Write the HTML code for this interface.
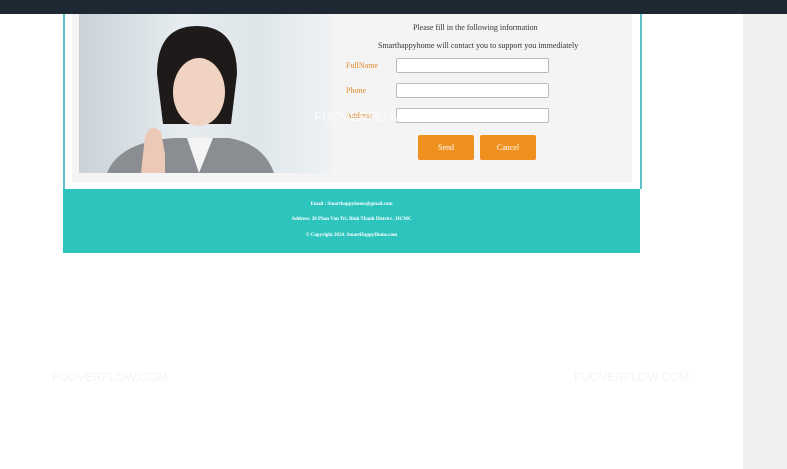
<!DOCTYPE html>
<html><head><style>
body{margin:0;width:787px;height:469px;background:#fff;position:relative;overflow:hidden;font-family:"Liberation Serif",serif}
.top{position:absolute;left:0;top:0;width:787px;height:14px;background:#1d2832}
.right{position:absolute;left:743px;top:14px;width:44px;height:455px;background:#efefef}
.cont{position:absolute;left:63px;top:14px;width:575px;height:175px;border-left:2px solid #5fc0c8;border-right:2px solid #5fc0c8;background:#fff}
.panel{position:absolute;left:72px;top:14px;width:560px;height:168px;background:#f4f4f4}
.img{position:absolute;left:79px;top:14px;width:252px;height:159px;background:linear-gradient(90deg,#c9d2d8,#e6ecef 40%,#dfe6ea 70%,#eef2f4)}
.t{position:absolute;font-size:8px;color:#333;white-space:nowrap}
.lab{position:absolute;left:346px;font-size:8px;color:#e08a2a}
.in{position:absolute;left:396px;width:151px;height:13px;border:1px solid #bbb;background:#fff;border-radius:2px}
.btn{position:absolute;top:135px;width:56px;height:25px;background:#f0901e;color:#fff;font-size:8px;text-align:center;line-height:25px;border-radius:2px}
.foot{position:absolute;left:63px;top:189px;width:577px;height:64px;background:#2ec4be}
.f{position:absolute;width:577px;left:0;text-align:center;color:#fff;font-size:5px;font-weight:bold}
.wm{position:absolute;font-family:"Liberation Sans",sans-serif;color:rgba(255,255,255,0.7);font-size:13px;letter-spacing:0px}
.wm2{position:absolute;font-family:"Liberation Sans",sans-serif;color:#f4f4f4;font-size:12px}
</style></head><body>
<div class="top"></div>
<div class="right"></div>
<div class="cont"></div>
<div class="panel"></div>
<div class="img">
<svg width="252" height="159" viewBox="0 0 252 159">
<path d="M78 60 Q78 12 118 12 Q158 12 158 60 L152 110 L84 110Z" fill="#1e1a1a"/>
<ellipse cx="120" cy="78" rx="26" ry="34" fill="#f1d3c4"/>
<path d="M28 159 Q40 128 95 124 L150 124 Q185 130 195 159Z" fill="#8a8d92"/>
<path d="M108 124 L120 159 L134 124Z" fill="#f4f4f4"/>
<path d="M62 159 L66 122 Q72 108 82 118 L86 140 L86 159Z" fill="#ecc8b6"/>
</svg></div>
<div class="t" style="left:413px;top:23px">Please fill in the following information</div>
<div class="t" style="left:378px;top:41px">Smarthappyhome will contact you to support you immediately</div>
<div class="lab" style="top:61px">FullName</div>
<div class="lab" style="top:86px">Phone</div>
<div class="lab" style="top:111px">Address</div>
<div class="in" style="top:58px"></div>
<div class="in" style="top:83px"></div>
<div class="in" style="top:108px"></div>
<div class="wm" style="left:314px;top:109px">FUOVERFLOW.COM</div>
<div class="btn" style="left:418px">Send</div>
<div class="btn" style="left:480px">Cancel</div>
<div class="foot">
<div class="f" style="top:13px">Email : Smarthappyhome@gmail.com</div>
<div class="f" style="top:28px">Address: 20 Phan Van Tri, Binh Thanh District , HCMC</div>
<div class="f" style="top:44px">© Copyright 2024. SmartHappyHome.com</div>
</div>
<div class="wm2" style="left:52px;top:370px">FUOVERFLOW.COM</div>
<div class="wm2" style="left:574px;top:370px">FUOVERFLOW.COM</div>
</body></html>
